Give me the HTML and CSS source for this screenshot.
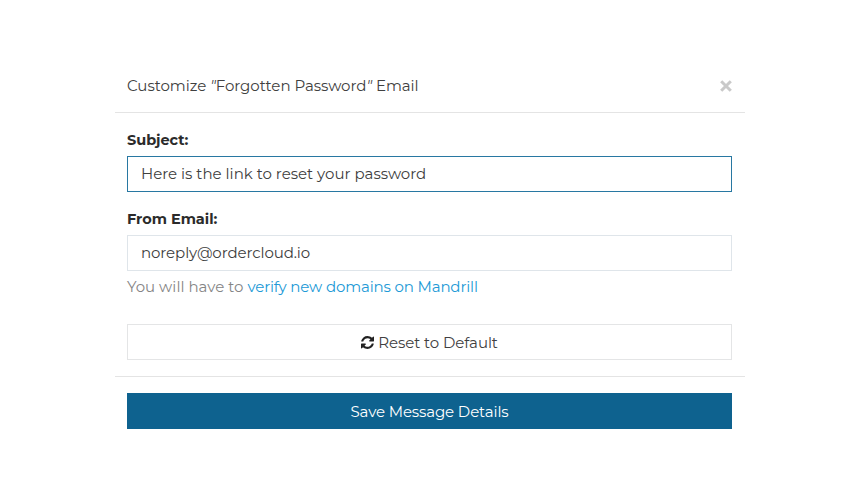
FILE: index.html
```html
<!DOCTYPE html>
<html lang="en">
<head>
<meta charset="utf-8">
<title>Customize Email</title>
<link rel="stylesheet" href="styles.css">
</head>
<body>
<main class="modal">
  <header class="modal-header">
    <h1 class="title"><span class="t">Customize <i>"</i>Forgotten Password<i>"</i> Email</span></h1>
    <button class="close" aria-label="Close"><svg width="12" height="12" viewBox="0 0 12 12"><path d="M1.2 1.2l9.6 9.6M10.8 1.2l-9.6 9.6"/></svg></button>
  </header>
  <section class="modal-body">
    <label class="label"><span class="t">Subject:</span></label>
    <div class="field field-active"><span class="t">Here is the link to reset your password</span></div>
    <label class="label label-from"><span class="t">From Email:</span></label>
    <div class="field"><span class="t t-email">noreply@ordercloud.io</span></div>
    <p class="help"><span class="t">You will have to </span><a class="t">verify new domains on Mandrill</a></p>
    <button class="reset"><svg class="refresh" width="13" height="13" viewBox="0 0 1536 1536"><path d="M1511 928q0 5-1 7-64 268-268 434.500T764 1536q-146 0-282.500-55T238 1324l-129 129q-19 19-45 19t-45-19-19-45V960q0-26 19-45t45-19h448q26 0 45 19t19 45-19 45l-137 137q71 66 161 102t187 36q134 0 250-65t186-179q11-17 53-117 8-23 30-23h192q13 0 22.500 9.500t9.500 22.500zm25-800v448q0 26-19 45t-45 19h-448q-26 0-45-19t-19-45 19-45l138-138Q969 256 768 256q-134 0-250 65T332 500q-11 17-53 117-8 23-30 23H50q-13 0-22.500-9.500T18 608v-7q65-268 270-434.500T768 0q146 0 284 55.500T1297 212l130-129q19-19 45-19t45 19 19 45z"/></svg><span class="t">Reset to Default</span></button>
  </section>
  <footer class="modal-footer">
    <button class="save"><span class="t">Save Message Details</span></button>
  </footer>
</main>
</body>
</html>
```
FILE: styles.css
```css
* { box-sizing: border-box; }
body { margin: 0; background: #fff; font-family: "Gotham", "Montserrat", "Lato", sans-serif; font-size: 15px; color: #404040; }
.modal { width: 630px; margin: 60px 0 0 115px; }
.modal-header { height: 53px; padding: 0 13px 0 12px; border-bottom: 1px solid #e4e4e4; display: flex; align-items: center; justify-content: space-between; }
.title { margin: 0; font-size: inherit; font-weight: 400; line-height: 20px; padding-bottom: 1px; letter-spacing: -0.03px; }
.t { white-space: pre; }
button { font: inherit; color: inherit; border-radius: 0; padding: 0; }
.close { display: flex; border: 0; background: none; }
.close svg { stroke: #c9c9c9; stroke-width: 3; }
.modal-body { padding: 17px 13px 16px 12px; border-bottom: 1px solid #e4e4e4; }
.label { display: block; height: 26px; line-height: 21px; font-size: 14.5px; font-weight: 700; color: #2b2b2b; letter-spacing: -0.02px; }
.label-from { margin-top: 17px; }
.field { height: 36px; border: 1px solid #dfe5ea; padding: 0 13px; line-height: 34px; }
.field-active { border-color: #2878a2; }
.t-email { letter-spacing: -0.09px; }
.help { margin: 6px 0 27px; line-height: 20px; color: #858585; letter-spacing: 0.02px; }
.help a { color: #2199d6; letter-spacing: -0.15px; }
.reset { width: 100%; height: 36px; border: 1px solid #e4e5e6; background: #fff; display: flex; align-items: center; justify-content: center; gap: 4px; letter-spacing: -0.08px; }
.refresh { fill: #222; }
.modal-footer { padding: 16px 13px 0 12px; }
.save { width: 100%; height: 36px; border: 0; background: #0e628f; color: #fff; display: block; letter-spacing: -0.12px; }
```
